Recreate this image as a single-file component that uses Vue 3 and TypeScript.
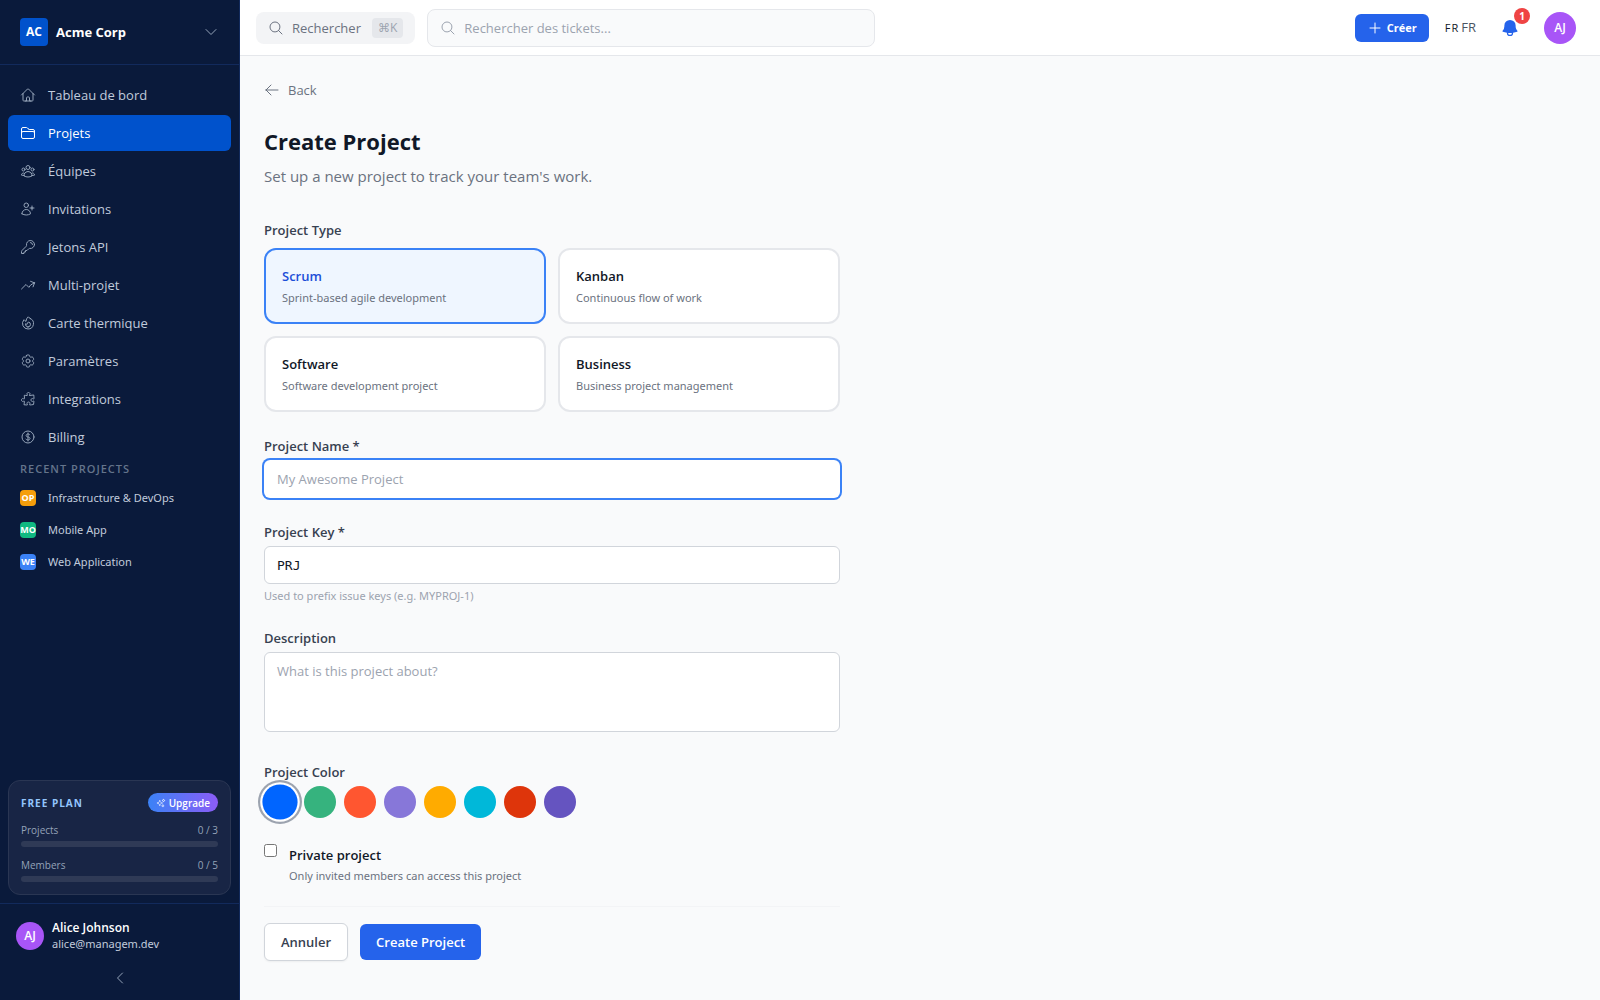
<script setup lang="ts">
import { onMounted, ref } from 'vue'

interface NavItem {
  label: string
  paths: string[]
}

interface RecentProject {
  code: string
  name: string
  color: string
}

interface ProjectType {
  id: string
  title: string
  text: string
}

interface Usage {
  label: string
  used: number
  limit: number
}

const navItems: NavItem[] = [
  {
    label: 'Tableau de bord',
    paths: [
      'm2.25 12 8.954-8.955c.44-.439 1.152-.439 1.591 0L21.75 12M4.5 9.75v10.125c0 .621.504 1.125 1.125 1.125H9.75v-4.875c0-.621.504-1.125 1.125-1.125h2.25c.621 0 1.125.504 1.125 1.125V21h4.125c.621 0 1.125-.504 1.125-1.125V9.75M8.25 21h8.25',
    ],
  },
  {
    label: 'Projets',
    paths: [
      'M2.25 12.75V12A2.25 2.25 0 0 1 4.5 9.75h15A2.25 2.25 0 0 1 21.75 12v.75m-8.69-6.44-2.12-2.12a1.5 1.5 0 0 0-1.061-.44H4.5A2.25 2.25 0 0 0 2.25 6v12a2.25 2.25 0 0 0 2.25 2.25h15A2.25 2.25 0 0 0 21.75 18V9a2.25 2.25 0 0 0-2.25-2.25h-5.379a1.5 1.5 0 0 1-1.06-.44Z',
    ],
  },
  {
    label: 'Équipes',
    paths: [
      'M18 18.72a9.094 9.094 0 0 0 3.741-.479 3 3 0 0 0-4.682-2.72m.94 3.198.001.031c0 .225-.012.447-.037.666A11.944 11.944 0 0 1 12 21c-2.17 0-4.207-.576-5.963-1.584A6.062 6.062 0 0 1 6 18.719m12 0a5.971 5.971 0 0 0-.941-3.197m0 0A5.995 5.995 0 0 0 12 12.75a5.995 5.995 0 0 0-5.058 2.772m0 0a3 3 0 0 0-4.681 2.72 8.986 8.986 0 0 0 3.74.477m.94-3.197a5.971 5.971 0 0 0-.94 3.197M15 6.75a3 3 0 1 1-6 0 3 3 0 0 1 6 0Zm6 3a2.25 2.25 0 1 1-4.5 0 2.25 2.25 0 0 1 4.5 0Zm-13.5 0a2.25 2.25 0 1 1-4.5 0 2.25 2.25 0 0 1 4.5 0Z',
    ],
  },
  {
    label: 'Invitations',
    paths: [
      'M18 7.5v3m0 0v3m0-3h3m-3 0h-3m-2.25-4.125a3.375 3.375 0 1 1-6.75 0 3.375 3.375 0 0 1 6.75 0ZM3 19.235v-.11a6.375 6.375 0 0 1 12.75 0v.109A12.318 12.318 0 0 1 9.374 21c-2.331 0-4.512-.645-6.374-1.766Z',
    ],
  },
  {
    label: 'Jetons API',
    paths: [
      'M15.75 5.25a3 3 0 0 1 3 3m3 0a6 6 0 0 1-7.029 5.912c-.563-.097-1.159.026-1.563.43L10.5 17.25H8.25v2.25H6v2.25H2.25v-2.818c0-.597.237-1.17.659-1.591l6.499-6.499c.404-.404.527-1 .43-1.563A6 6 0 1 1 21.75 8.25Z',
    ],
  },
  {
    label: 'Multi-projet',
    paths: [
      'M2.25 18 9 11.25l4.306 4.306a11.95 11.95 0 0 1 5.814-5.518l2.74-1.22m0 0-5.94-2.281m5.94 2.28-2.28 5.941',
    ],
  },
  {
    label: 'Carte thermique',
    paths: [
      'M15.362 5.214A8.252 8.252 0 0 1 12 21 8.25 8.25 0 0 1 6.038 7.047 8.287 8.287 0 0 0 9 9.601a8.983 8.983 0 0 1 3.361-6.867 8.21 8.21 0 0 0 3 2.48Z',
      'M12 18a3.75 3.75 0 0 0 .495-7.468 5.99 5.99 0 0 0-1.925 3.547 5.975 5.975 0 0 1-2.133-1.001A3.75 3.75 0 0 0 12 18Z',
    ],
  },
  {
    label: 'Paramètres',
    paths: [
      'M9.594 3.94c.09-.542.56-.94 1.11-.94h2.593c.55 0 1.02.398 1.11.94l.213 1.281c.063.374.313.686.645.87.074.04.147.083.22.127.325.196.72.257 1.075.124l1.217-.456a1.125 1.125 0 0 1 1.37.49l1.296 2.247a1.125 1.125 0 0 1-.26 1.431l-1.003.827c-.293.241-.438.613-.43.992a7.723 7.723 0 0 1 0 .255c-.008.378.137.75.43.991l1.004.827c.424.35.534.955.26 1.43l-1.298 2.247a1.125 1.125 0 0 1-1.369.491l-1.217-.456c-.355-.133-.75-.072-1.076.124a6.47 6.47 0 0 1-.22.128c-.331.183-.581.495-.644.869l-.213 1.281c-.09.543-.56.94-1.11.94h-2.594c-.55 0-1.019-.398-1.11-.94l-.213-1.281c-.062-.374-.312-.686-.644-.87a6.52 6.52 0 0 1-.22-.127c-.325-.196-.72-.257-1.076-.124l-1.217.456a1.125 1.125 0 0 1-1.369-.49l-1.297-2.247a1.125 1.125 0 0 1 .26-1.431l1.004-.827c.292-.24.437-.613.43-.991a6.932 6.932 0 0 1 0-.255c.007-.38-.138-.751-.43-.992l-1.004-.827a1.125 1.125 0 0 1-.26-1.43l1.297-2.247a1.125 1.125 0 0 1 1.37-.491l1.216.456c.356.133.751.072 1.076-.124.072-.044.146-.086.22-.128.332-.183.582-.495.644-.869l.214-1.28Z',
      'M15 12a3 3 0 1 1-6 0 3 3 0 0 1 6 0Z',
    ],
  },
  {
    label: 'Integrations',
    paths: [
      'M14.25 6.087c0-.355.186-.676.401-.959.221-.29.349-.634.349-1.003 0-1.036-1.007-1.875-2.25-1.875s-2.25.84-2.25 1.875c0 .369.128.713.349 1.003.215.283.401.604.401.959v0a.64.64 0 0 1-.657.643 48.39 48.39 0 0 1-4.163-.3c.186 1.613.293 3.25.315 4.907a.656.656 0 0 1-.658.663v0c-.355 0-.676-.186-.959-.401a1.647 1.647 0 0 0-1.003-.349c-1.036 0-1.875 1.007-1.875 2.25s.84 2.25 1.875 2.25c.369 0 .713-.128 1.003-.349.283-.215.604-.401.959-.401v0c.31 0 .555.26.532.57a48.039 48.039 0 0 1-.642 5.056c1.518.19 3.058.309 4.616.354a.64.64 0 0 0 .657-.643v0c0-.355-.186-.676-.401-.959a1.647 1.647 0 0 1-.349-1.003c0-1.035 1.008-1.875 2.25-1.875 1.243 0 2.25.84 2.25 1.875 0 .369-.128.713-.349 1.003-.215.283-.4.604-.4.959v0c0 .333.277.599.61.58a48.1 48.1 0 0 0 5.427-.63 48.05 48.05 0 0 0 .582-4.717.532.532 0 0 0-.533-.57v0c-.355 0-.676.186-.959.401-.29.221-.634.349-1.003.349-1.035 0-1.875-1.007-1.875-2.25s.84-2.25 1.875-2.25c.37 0 .713.128 1.003.349.283.215.604.401.96.401v0a.656.656 0 0 0 .658-.663 48.422 48.422 0 0 0-.37-5.36c-1.886.342-3.81.574-5.766.689a.578.578 0 0 1-.61-.58v0Z',
    ],
  },
  {
    label: 'Billing',
    paths: [
      'M12 6v12m-3-2.818.879.659c1.171.879 3.07.879 4.242 0 1.172-.879 1.172-2.303 0-3.182C13.536 12.219 12.768 12 12 12c-.725 0-1.45-.22-2.003-.659-1.106-.879-1.106-2.303 0-3.182s2.9-.879 4.006 0l.415.33M21 12a9 9 0 1 1-18 0 9 9 0 0 1 18 0Z',
    ],
  },
]

const recentProjects: RecentProject[] = [
  { code: 'OP', name: 'Infrastructure & DevOps', color: '#f59e0b' },
  { code: 'MO', name: 'Mobile App', color: '#10b981' },
  { code: 'WE', name: 'Web Application', color: '#3b82f6' },
]

const usages: Usage[] = [
  { label: 'Projects', used: 0, limit: 3 },
  { label: 'Members', used: 0, limit: 5 },
]

const projectTypes: ProjectType[] = [
  { id: 'scrum', title: 'Scrum', text: 'Sprint-based agile development' },
  { id: 'kanban', title: 'Kanban', text: 'Continuous flow of work' },
  { id: 'software', title: 'Software', text: 'Software development project' },
  { id: 'business', title: 'Business', text: 'Business project management' },
]

const colors = ['#0065ff', '#36b37e', '#ff5630', '#8777d9', '#ffab00', '#00b8d9', '#de350b', '#6554c0']

const activeNav = ref('Projets')
const selectedType = ref('scrum')
const selectedColor = ref(colors[0])
const projectName = ref('')
const projectKey = ref('PRJ')
const description = ref('')
const isPrivate = ref(false)
const nameInput = ref<HTMLInputElement | null>(null)

onMounted(() => nameInput.value?.focus())
</script>

<template>
  <div class="app">
    <aside class="sidebar">
      <button class="org" type="button">
        <span class="org-logo">AC</span>
        <span class="org-name">Acme Corp</span>
        <svg class="icon" viewBox="0 0 24 24"><path d="m19.5 8.25-7.5 7.5-7.5-7.5" /></svg>
      </button>

      <nav class="nav">
        <a
          v-for="item in navItems"
          :key="item.label"
          href="#"
          class="nav-item"
          :class="{ active: item.label === activeNav }"
          @click.prevent="activeNav = item.label"
        >
          <svg class="icon" viewBox="0 0 24 24">
            <path v-for="d in item.paths" :key="d" :d="d" />
          </svg>
          <span>{{ item.label }}</span>
        </a>
        <h2 class="nav-heading">Recent projects</h2>
        <a v-for="p in recentProjects" :key="p.code" href="#" class="recent" @click.prevent>
          <span class="recent-badge" :style="{ backgroundColor: p.color }">{{ p.code }}</span>
          <span>{{ p.name }}</span>
        </a>
      </nav>

      <section class="plan">
        <div class="plan-head">
          <span class="plan-name">Free plan</span>
          <button class="upgrade" type="button">
            <svg class="icon-sm" viewBox="0 0 24 24">
              <path
                d="M9.813 15.904 9 18.75l-.813-2.846a4.5 4.5 0 0 0-3.09-3.09L2.25 12l2.846-.813a4.5 4.5 0 0 0 3.09-3.09L9 5.25l.813 2.846a4.5 4.5 0 0 0 3.09 3.09L15.75 12l-2.846.813a4.5 4.5 0 0 0-3.09 3.09ZM18.259 8.715 18 9.75l-.259-1.035a3.375 3.375 0 0 0-2.455-2.456L14.25 6l1.036-.259a3.375 3.375 0 0 0 2.455-2.456L18 2.25l.259 1.035a3.375 3.375 0 0 0 2.456 2.456L21.75 6l-1.035.259a3.375 3.375 0 0 0-2.456 2.456ZM16.894 20.567 16.5 21.75l-.394-1.183a2.25 2.25 0 0 0-1.423-1.423L13.5 18.75l1.183-.394a2.25 2.25 0 0 0 1.423-1.423l.394-1.183.394 1.183a2.25 2.25 0 0 0 1.423 1.423l1.183.394-1.183.394a2.25 2.25 0 0 0-1.423 1.423Z"
              />
            </svg>
            Upgrade
          </button>
        </div>
        <div v-for="u in usages" :key="u.label" class="usage">
          <div class="usage-row">
            <span>{{ u.label }}</span>
            <span>{{ u.used }} / {{ u.limit }}</span>
          </div>
          <div class="usage-track">
            <div class="usage-fill" :style="{ width: (u.used / u.limit) * 100 + '%' }"></div>
          </div>
        </div>
      </section>

      <footer class="account">
        <div class="account-row">
          <span class="avatar avatar-sm">AJ</span>
          <div class="account-text">
            <span class="account-name">Alice Johnson</span>
            <span class="account-mail">alice@managem.dev</span>
          </div>
        </div>
        <button class="collapse" type="button" aria-label="Collapse sidebar">
          <svg class="icon" viewBox="0 0 24 24"><path d="M15.75 19.5 8.25 12l7.5-7.5" /></svg>
        </button>
      </footer>
    </aside>

    <div class="page">
      <header class="topbar">
        <button class="quick" type="button">
          <svg class="icon" viewBox="0 0 24 24">
            <path d="m21 21-5.197-5.197m0 0A7.5 7.5 0 1 0 5.196 5.196a7.5 7.5 0 0 0 10.607 10.607Z" />
          </svg>
          <span>Rechercher</span>
          <kbd class="kbd">⌘K</kbd>
        </button>
        <label class="search">
          <svg class="icon" viewBox="0 0 24 24">
            <path d="m21 21-5.197-5.197m0 0A7.5 7.5 0 1 0 5.196 5.196a7.5 7.5 0 0 0 10.607 10.607Z" />
          </svg>
          <input type="search" placeholder="Rechercher des tickets..." aria-label="Rechercher des tickets" />
        </label>
        <div class="actions">
          <button class="create" type="button">
            <svg class="icon" viewBox="0 0 24 24"><path d="M12 4.5v15m7.5-7.5h-15" /></svg>
            Créer
          </button>
          <button class="lang" type="button"><span class="lang-flag">FR</span><span>FR</span></button>
          <button class="bell" type="button" aria-label="Notifications">
            <svg class="bell-icon" viewBox="0 0 24 24">
              <path
                fill-rule="evenodd"
                d="M5.25 9a6.75 6.75 0 0 1 13.5 0v.75c0 2.123.8 4.057 2.118 5.52a.75.75 0 0 1-.297 1.206c-1.544.57-3.16.99-4.831 1.243a3.75 3.75 0 1 1-7.48 0 24.585 24.585 0 0 1-4.831-1.244.75.75 0 0 1-.298-1.205A8.217 8.217 0 0 0 5.25 9.75V9Zm4.502 8.9a2.25 2.25 0 1 0 4.496 0 25.057 25.057 0 0 1-4.496 0Z"
                clip-rule="evenodd"
              />
            </svg>
            <span class="bell-badge">1</span>
          </button>
          <button class="avatar avatar-md" type="button">AJ</button>
        </div>
      </header>

      <main class="main">
        <a class="back" href="#" @click.prevent>
          <svg class="icon" viewBox="0 0 24 24"><path d="M10.5 19.5 3 12m0 0 7.5-7.5M3 12h18" /></svg>
          Back
        </a>
        <h1 class="title">Create Project</h1>
        <p class="subtitle">Set up a new project to track your team's work.</p>

        <form class="form" @submit.prevent>
          <div class="field" role="group" aria-labelledby="type-label">
            <span id="type-label" class="label label-type">Project Type</span>
            <div class="types">
              <button
                v-for="t in projectTypes"
                :key="t.id"
                type="button"
                class="type"
                :class="{ selected: t.id === selectedType }"
                :aria-pressed="t.id === selectedType"
                @click="selectedType = t.id"
              >
                <span class="type-title">{{ t.title }}</span>
                <span class="hint">{{ t.text }}</span>
              </button>
            </div>
          </div>

          <div class="field">
            <label class="label" for="name">Project Name *</label>
            <input id="name" ref="nameInput" v-model="projectName" class="input" type="text" placeholder="My Awesome Project" />
          </div>

          <div class="field">
            <label class="label" for="key">Project Key *</label>
            <input id="key" v-model="projectKey" class="input mono" type="text" />
            <p class="help">Used to prefix issue keys (e.g. MYPROJ-1)</p>
          </div>

          <div class="field">
            <label class="label" for="description">Description</label>
            <textarea id="description" v-model="description" class="input area" placeholder="What is this project about?"></textarea>
          </div>

          <div class="field" role="group" aria-labelledby="color-label">
            <span id="color-label" class="label">Project Color</span>
            <div class="swatches">
              <button
                v-for="c in colors"
                :key="c"
                type="button"
                class="swatch"
                :class="{ selected: c === selectedColor }"
                :style="{ backgroundColor: c }"
                :aria-label="c"
                @click="selectedColor = c"
              ></button>
            </div>
          </div>

          <div class="private">
            <input id="private" v-model="isPrivate" type="checkbox" />
            <label for="private">
              <span class="private-title">Private project</span>
              <span class="hint">Only invited members can access this project</span>
            </label>
          </div>

          <div class="buttons">
            <button class="btn btn-secondary" type="button">Annuler</button>
            <button class="btn btn-primary" type="submit">Create Project</button>
          </div>
        </form>
      </main>
    </div>
  </div>
</template>

<style>
body {
  margin: 0;
  background: #f9fafb;
}
</style>

<style scoped>
.app,
.app * {
  box-sizing: border-box;
}

.app {
  display: flex;
  min-height: 100vh;
  font-family: 'Segoe UI', 'Open Sans', 'Noto Sans', sans-serif;
  font-size: 13px;
  line-height: 20px;
  color: #111827;
  background: #f9fafb;
}

button,
input,
textarea {
  margin: 0;
  font: inherit;
  color: inherit;
}

button {
  padding: 0;
  border: 0;
  background: none;
  cursor: pointer;
}

a {
  color: inherit;
  text-decoration: none;
}

h1,
h2,
p {
  margin: 0;
}

.icon {
  flex: none;
  width: 16px;
  height: 16px;
  fill: none;
  stroke: currentColor;
  stroke-width: 1.5;
  stroke-linecap: round;
  stroke-linejoin: round;
}

.icon-sm {
  flex: none;
  width: 10px;
  height: 10px;
  fill: none;
  stroke: currentColor;
  stroke-width: 1.5;
}

/* Sidebar */
.sidebar {
  display: flex;
  flex: none;
  flex-direction: column;
  width: 240px;
  color: #c1cbdb;
  background: #0a1a3b;
  border-right: 1px solid #122a5c;
}

.org {
  display: flex;
  align-items: center;
  gap: 8px;
  height: 65px;
  padding: 0 20px;
  border-bottom: 1px solid #122a5c;
  text-align: left;
}

.org-logo {
  display: grid;
  place-items: center;
  width: 28px;
  height: 28px;
  border-radius: 4px;
  font-size: 12px;
  font-weight: 700;
  color: #fff;
  background: #0052cc;
}

.org-name {
  flex: 1;
  font-weight: 700;
  color: #fff;
}

.org .icon {
  color: #94a3b8;
}

.nav {
  display: flex;
  flex: 1;
  flex-direction: column;
  gap: 2px;
  padding: 12px 8px;
}

.nav-item {
  display: flex;
  align-items: center;
  gap: 12px;
  height: 36px;
  padding: 0 12px;
  border-radius: 6px;
}

.nav-item .icon {
  color: #94a3b8;
}

.nav-item.active,
.nav-item.active .icon {
  color: #fff;
}

.nav-item.active {
  background: #0052cc;
}

.nav-heading {
  padding: 4px 12px;
  font-size: 11px;
  font-weight: 600;
  line-height: 16px;
  letter-spacing: 1px;
  text-transform: uppercase;
  color: #64748b;
}

.recent {
  display: flex;
  align-items: center;
  gap: 12px;
  height: 30px;
  padding: 0 12px;
  font-family: 'Segoe UI', 'Noto Sans', sans-serif;
  font-size: 11px;
}

.recent-badge {
  display: grid;
  place-items: center;
  width: 16px;
  height: 16px;
  border-radius: 4px;
  font-family: 'Segoe UI', 'Open Sans', sans-serif;
  font-size: 9px;
  font-weight: 700;
  line-height: 16px;
  color: #fff;
}

.plan {
  display: flex;
  flex-direction: column;
  gap: 10px;
  margin: 0 8px 8px;
  padding: 12px;
  border: 1px solid #2a3653;
  border-radius: 12px;
  background: #182545;
}

.plan-head,
.usage-row {
  display: flex;
  align-items: center;
  justify-content: space-between;
}

.plan-head {
  height: 19px;
}

.plan-name {
  font-size: 10px;
  font-weight: 700;
  letter-spacing: 1px;
  text-transform: uppercase;
  color: #93c5fd;
}

.upgrade {
  display: flex;
  align-items: center;
  gap: 3px;
  height: 19px;
  padding: 0 8px;
  border-radius: 10px;
  font-size: 10px;
  font-weight: 600;
  line-height: 16px;
  color: #fff;
  background: linear-gradient(90deg, #3b82f6, #8b5cf6);
}

.usage {
  display: flex;
  flex-direction: column;
  gap: 3px;
}

.usage-row {
  font-size: 10px;
  line-height: 16px;
  color: #94a3b8;
}

.usage-track {
  height: 6px;
  overflow: hidden;
  border-radius: 3px;
  background: #2f3a56;
}

.usage-fill {
  height: 100%;
  background: #3b82f6;
}

.account {
  display: flex;
  flex-direction: column;
  gap: 18px;
  padding: 16px 16px 14px;
  border-top: 1px solid #122a5c;
}

.account-row {
  display: flex;
  align-items: center;
  gap: 8px;
}

.account-text {
  display: flex;
  flex-direction: column;
  font-size: 12px;
  line-height: 16px;
}

.account-name {
  font-weight: 600;
  color: #fff;
}

.account-mail {
  font-family: 'Segoe UI', 'Noto Sans', sans-serif;
  font-size: 11px;
}

.avatar {
  display: grid;
  flex: none;
  place-items: center;
  border-radius: 50%;
  font-size: 12px;
  font-weight: 600;
  color: #fff;
  background: #a855f7;
}

.avatar-sm {
  width: 28px;
  height: 28px;
}

.avatar-md {
  width: 32px;
  height: 32px;
}

.collapse {
  display: grid;
  place-items: center;
  color: #94a3b8;
}

/* Top bar */
.page {
  display: flex;
  flex: 1;
  flex-direction: column;
  min-width: 0;
}

.topbar {
  display: flex;
  align-items: center;
  gap: 12px;
  height: 56px;
  padding: 0 24px 0 16px;
  border-bottom: 1px solid #e5e7eb;
  background: #fff;
}

.quick {
  display: flex;
  align-items: center;
  gap: 8px;
  height: 32px;
  padding: 0 12px;
  border-radius: 8px;
  color: #6b7280;
  background: #f3f4f6;
}

.kbd {
  margin-left: 3px;
  padding: 0 6px;
  border-radius: 4px;
  font-family: 'Segoe UI', 'Open Sans', 'DejaVu Sans', sans-serif;
  font-size: 12px;
  color: #9ca3af;
  background: #e5e7eb;
}

.search {
  display: flex;
  flex: 1;
  align-items: center;
  gap: 8px;
  max-width: 448px;
  height: 38px;
  padding: 0 12px;
  border: 1px solid #e5e7eb;
  border-radius: 8px;
  color: #9ca3af;
  background: #f9fafb;
}

.search input {
  flex: 1;
  min-width: 0;
  padding: 0;
  border: 0;
  outline: 0;
  background: none;
}

input::placeholder,
textarea::placeholder {
  color: #9ca3af;
  opacity: 1;
}

.actions {
  display: flex;
  align-items: center;
  gap: 16px;
  margin-left: auto;
}

.create {
  display: flex;
  align-items: center;
  gap: 4px;
  height: 28px;
  padding: 0 12px;
  border-radius: 6px;
  font-size: 11px;
  font-weight: 700;
  color: #fff;
  background: #2563eb;
}

.lang {
  display: flex;
  align-items: baseline;
  gap: 2px;
  color: #4b5563;
}

.lang-flag {
  font-size: 11px;
  letter-spacing: 1px;
  color: #111827;
}

.bell {
  position: relative;
  display: grid;
  place-items: center;
  width: 36px;
  height: 36px;
}

.bell-icon {
  width: 20px;
  height: 20px;
  fill: #2563eb;
}

.bell-badge {
  position: absolute;
  top: -2px;
  right: -2px;
  width: 16px;
  height: 16px;
  border-radius: 50%;
  font-size: 10px;
  font-weight: 700;
  line-height: 16px;
  text-align: center;
  color: #fff;
  background: #ef4444;
}

/* Project form */
.main {
  padding: 24px;
}

.back {
  display: flex;
  align-items: center;
  gap: 8px;
  width: fit-content;
  color: #6b7280;
}

.title {
  margin-top: 24px;
  font-size: 22px;
  font-weight: 700;
  line-height: 34px;
}

.subtitle {
  margin: 6px 0 32px;
  font-size: 15px;
  line-height: 24px;
  color: #6b7280;
}

.form {
  max-width: 576px;
}

.field {
  display: flex;
  flex-direction: column;
  gap: 4px;
  margin-bottom: 24px;
}

.label {
  font-weight: 600;
  color: #374151;
}

.label-type {
  margin-bottom: 4px;
}

.types {
  display: grid;
  grid-template-columns: 1fr 1fr;
  gap: 12px;
}

.type {
  display: flex;
  flex-direction: column;
  gap: 4px;
  padding: 16px;
  border: 2px solid #e5e7eb;
  border-radius: 12px;
  text-align: left;
  background: #fff;
}

.type.selected {
  border-color: #3b82f6;
  background: #eff6ff;
}

.type-title {
  font-weight: 600;
}

.type.selected .type-title {
  color: #1d4ed8;
}

.hint,
.help {
  font-family: 'Segoe UI', 'Noto Sans', sans-serif;
  font-size: 11px;
  line-height: 16px;
  color: #6b7280;
}

.help {
  color: #9ca3af;
}

.input {
  width: 100%;
  height: 38px;
  padding: 8px 12px;
  border: 1px solid #d1d5db;
  border-radius: 6px;
  outline: 0;
  background: #fff;
}

.input:focus {
  border-color: transparent;
  box-shadow: 0 0 0 2px #3b82f6;
}

.mono {
  font-family: Consolas, 'DejaVu Sans Mono', monospace;
}

.area {
  height: 80px;
  margin-bottom: 6px;
  resize: none;
}

.swatches {
  display: flex;
  gap: 8px;
}

.swatch {
  width: 32px;
  height: 32px;
  border-radius: 50%;
}

.swatch.selected {
  transform: scale(1.1);
  box-shadow: 0 0 0 2px #fff, 0 0 0 4px #9ca3af;
}

.private {
  display: flex;
  align-items: flex-start;
  gap: 12px;
}

.private input {
  width: 13px;
  height: 13px;
  margin-top: 2px;
}

.private label {
  display: flex;
  flex-direction: column;
}

.private-title {
  font-weight: 600;
  line-height: 26px;
}

.buttons {
  display: flex;
  align-items: center;
  gap: 12px;
  margin-top: 22px;
  padding-top: 16px;
  border-top: 1px solid #f3f4f6;
}

.btn {
  height: 36px;
  padding: 0 16px;
  border-radius: 6px;
  font-weight: 600;
}

.btn-secondary {
  height: 38px;
  border: 1px solid #d1d5db;
  color: #374151;
  background: #fff;
  box-shadow: 0 1px 2px rgba(0, 0, 0, 0.05);
}

.btn-primary {
  color: #fff;
  background: #2563eb;
}
</style>
